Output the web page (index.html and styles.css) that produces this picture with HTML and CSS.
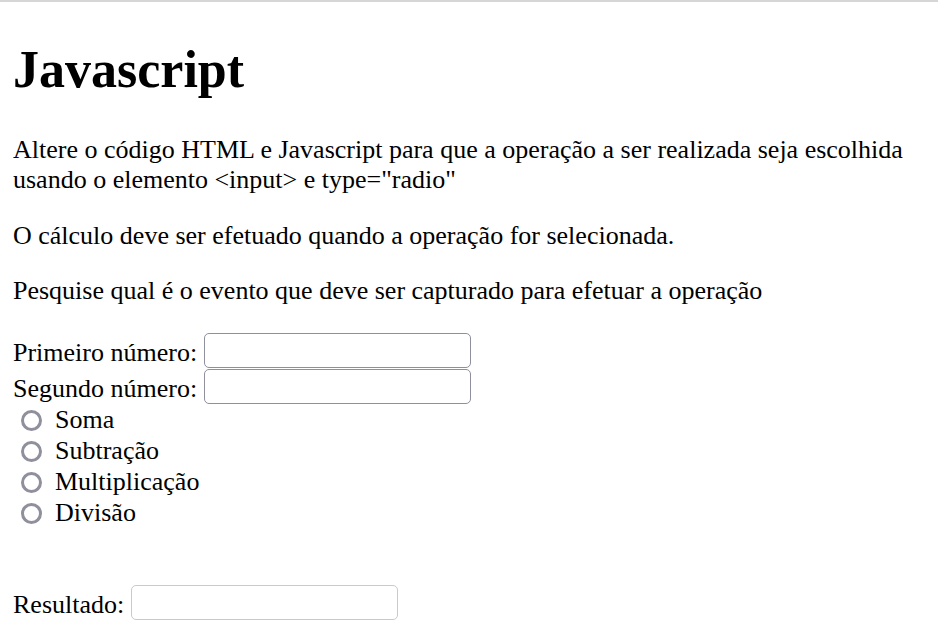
FILE: index.html
```html
<!DOCTYPE html>
<html lang="pt">
<head>
<meta charset="utf-8">
<title>Javascript</title>
<link rel="stylesheet" href="styles.css">
</head>
<body>
<h1 class="title">Javascript</h1>
<p class="para">Altere o código HTML e Javascript para que a operação a ser realizada seja escolhida usando o elemento &lt;input&gt; e type="radio"</p>
<p class="para">O cálculo deve ser efetuado quando a operação for selecionada.</p>
<p class="para">Pesquise qual é o evento que deve ser capturado para efetuar a operação</p>
<div class="form">
  <label class="row"><span class="label">Primeiro número: </span><input class="field" type="text"></label>
  <label class="row"><span class="label">Segundo número: </span><input class="field" type="text"></label>
  <label class="opt"><span class="radio"></span>Soma</label>
  <label class="opt"><span class="radio"></span>Subtração</label>
  <label class="opt"><span class="radio"></span>Multiplicação</label>
  <label class="opt"><span class="radio"></span>Divisão</label>
  <label class="row result"><span class="label">Resultado: </span><input class="field disabled" type="text" disabled></label>
</div>
</body>
</html>
```
FILE: styles.css
```css
html {
  border-top: 2px solid #d6d6d6;
  background: #fff;
}
body {
  margin: 13px;
  font-family: "Liberation Serif", "Times New Roman", serif;
  font-size: 26px;
  line-height: 1.15;
  color: #000;
}
.title {
  font-size: 52px;
  font-weight: bold;
  margin: 25px 0 35px;
  line-height: 1.15;
}
.para {
  margin: 26px 0;
}
.form {
  display: flex;
  flex-direction: column;
  align-items: flex-start;
}
.row {
  display: flex;
  align-items: center;
  height: 36px;
}
.label {
  white-space: pre;
  padding-top: 5px;
}
.field {
  box-sizing: border-box;
  width: 267px;
  height: 35px;
  border: 1.6px solid #8f8f9d;
  border-radius: 5px;
  background: #fff;
  margin: 0;
  padding: 0 4px;
  font: 22px "Liberation Sans", Arial, sans-serif;
}
.field.disabled {
  border-color: #c9c9ce;
}
.opt {
  display: flex;
  align-items: center;
  height: 31px;
}
.radio {
  box-sizing: border-box;
  width: 21px;
  height: 21px;
  border: 3px solid #8f8f9d;
  border-radius: 50%;
  margin: 2px 13px 0 8px;
}
.result {
  margin-top: 56px;
}
```
